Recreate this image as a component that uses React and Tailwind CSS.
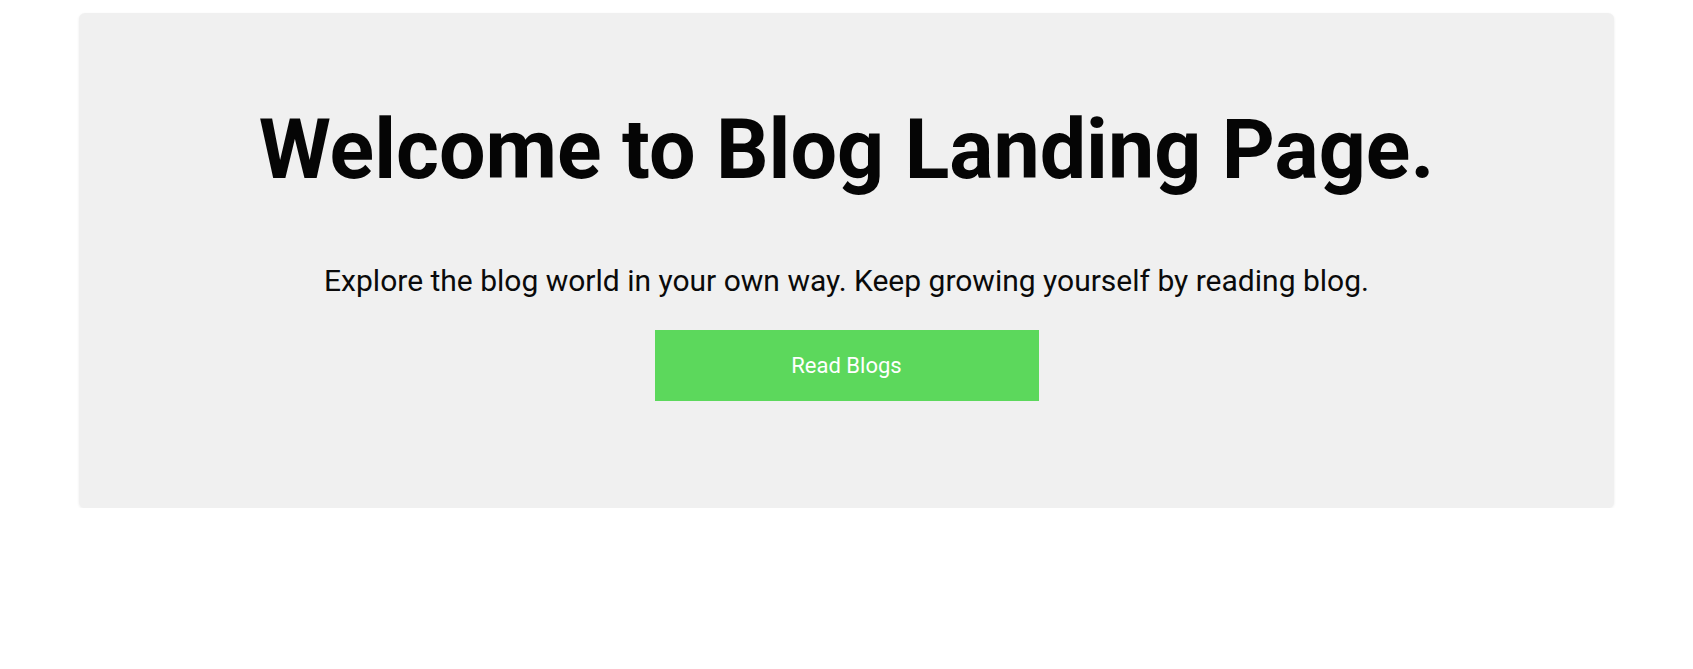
export default function App() {
  return (
    <div className="w-full bg-white pt-[13px]" style={{ fontFamily: "Roboto, 'Liberation Sans', sans-serif" }}>
      <section className="mx-auto max-w-[1535px] h-[495px] rounded-md bg-[#f0f0f0] shadow-[0_1px_3px_rgba(0,0,0,0.08)] flex flex-col items-center pt-[89px]">
        <h1 className="text-[82.5px] font-bold text-[#050505] leading-[1.17] tracking-[0px]">
          Welcome to Blog Landing Page.
        </h1>
        <p className="mt-[64px] text-[30px] text-[#0a0a0a] leading-[1.17]">
          Explore the blog world in your own way. Keep growing yourself by reading blog.
        </p>
        <button className="mt-[32px] w-[384px] h-[71px] bg-[#5cd85c] text-white text-[22px]">
          Read Blogs
        </button>
      </section>
    </div>
  );
}
